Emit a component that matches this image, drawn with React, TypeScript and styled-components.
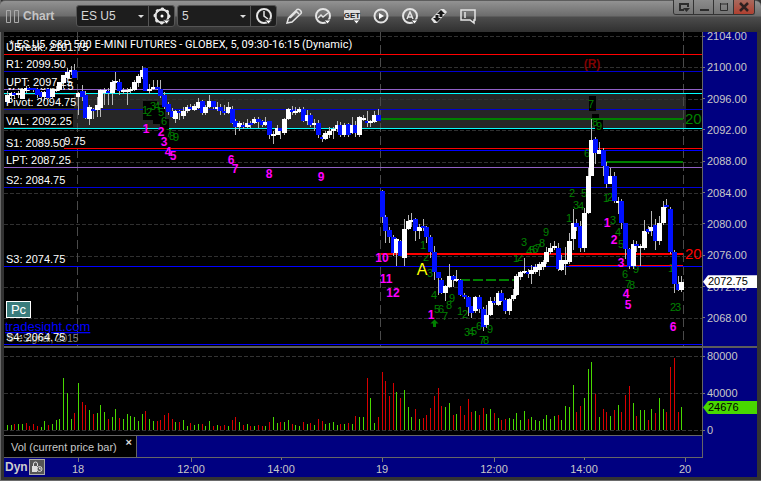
import React from "react";
import styled, { createGlobalStyle } from "styled-components";

const GlobalStyle = createGlobalStyle`
  * { box-sizing: border-box; }
  body {
    margin: 0;
    background: #303030;
    font-family: "Liberation Sans", Arial, sans-serif;
    font-size: 11px;
  }
`;

const Window = styled.main`
  display: flex;
  flex-direction: column;
  background: #333;
  border-left: 1px solid #6a6a6a;
  border-bottom: 1px solid #6a6a6a;
  padding: 0 4px 3px 3px;
`;

const Header = styled.header`
  display: flex;
  align-items: flex-start;
  height: 32px;
  margin: 0 -4px 0 -4px;
  padding: 5px 6px 0 6px;
  border-top: 1px solid #5c5c5c;
  border-radius: 5px 6px 0 0;
  background: linear-gradient(#929292 0, #6c6c6c 15px, #4c4c4c 16px, #2e2e2e 32px);
`;

const Brand = styled.h1`
  display: flex;
  align-items: center;
  gap: 4px;
  width: 70px;
  height: 20px;
  margin: 0;
  font-size: 12px;
  color: #c4c4c4;
`;

const Field = styled.div`
  display: flex;
  height: 22px;
  margin-top: -1px;
  margin-right: 2px;
  border: 1px solid #555;
  border-radius: 3px;
  background: #1d1d1d;
`;

const SelectBox = styled.label<{ $width: number }>`
  position: relative;
  display: block;
  width: ${(p) => p.$width}px;

  &::after {
    content: "";
    position: absolute;
    right: 4px;
    top: 9px;
    border: 3px solid transparent;
    border-top-color: #ddd;
    border-bottom: 0;
    pointer-events: none;
  }
`;

const Picker = styled.select`
  appearance: none;
  width: 100%;
  height: 20px;
  padding: 0 14px 0 4px;
  border: 0;
  background: transparent;
  color: #d8d8d8;
  font: 12px "Liberation Sans", Arial, sans-serif;
`;

const FieldButton = styled.button`
  display: grid;
  place-items: center;
  width: 26px;
  padding: 0;
  border: 0;
  border-left: 1px solid #555;
  background: transparent;
`;

const Tools = styled.nav`
  display: flex;
  flex: 1;
  gap: 9px;
  padding-left: 5px;
`;

const ToolButton = styled.button`
  display: grid;
  place-items: center;
  width: 20px;
  height: 20px;
  padding: 0;
  border: 0;
  background: transparent;
`;

const WindowControls = styled.div`
  display: flex;
  height: 15px;
  margin-top: -6px;
  border: 1px solid #333;
  border-top: 0;
  border-radius: 0 0 3px 3px;
  overflow: hidden;
`;

const ControlButton = styled.button<{ $danger?: boolean }>`
  display: grid;
  place-items: center;
  width: 20px;
  padding: 0;
  border: 0;
  border-right: 1px solid #333;
  background: ${(p) =>
    p.$danger ? "linear-gradient(#a86a5e, #b04030)" : "linear-gradient(#8c8c8c, #747474)"};
  &:last-child { border-right: 0; }
`;

const Board = styled.section`
  display: grid;
  grid-template-columns: minmax(0, 1fr) 55px;
  background: #000080;
`;

const Plot = styled.svg`
  display: block;
  width: 100%;
  height: auto;
  background: #000;
  font-family: "Liberation Sans", Arial, sans-serif;
  font-size: 11px;
`;

const Axis = styled.div<{ $top: number; $bottom: number; $line: number }>`
  position: relative;
  display: flex;
  flex-direction: column;
  justify-content: space-between;
  padding: ${(p) => p.$top}px 0 ${(p) => p.$bottom}px;
  border-left: 1px solid #666;
  line-height: ${(p) => p.$line}px;
  color: #c8c8c8;
`;

const AxisLabel = styled.span`
  display: flex;
  align-items: center;
  gap: 2px;
  &::before {
    content: "";
    width: 2px;
    height: 1px;
    background: #777;
  }
`;

const AxisTag = styled.output<{ $top: string; $color: string }>`
  position: absolute;
  left: 0;
  right: 0;
  top: ${(p) => p.$top};
  height: 13px;
  padding-left: 5px;
  line-height: 13px;
  color: #000;
  background: ${(p) => p.$color};
  clip-path: polygon(0 50%, 5px 0, 100% 0, 100% 100%, 5px 100%);
`;

const Divider = styled.div`
  grid-column: 1 / -1;
  height: 2px;
  background: #5c5c5c;
`;

const TabStrip = styled.div`
  height: 23px;
  border-top: 1px solid #666;
  border-bottom: 1px solid #666;
`;

const Tab = styled.div`
  display: flex;
  align-items: flex-start;
  justify-content: space-between;
  width: 133px;
  height: 21px;
  padding: 4px 4px 0 7px;
  border-right: 1px solid #666;
  background: #000;
  color: #c8c8c8;
  line-height: 14px;
`;

const CloseTab = styled.button`
  padding: 0;
  margin-top: -4px;
  border: 0;
  background: transparent;
  color: #ddd;
  font: bold 11px/12px "Liberation Sans", Arial, sans-serif;
`;

const AxisCorner = styled.div`
  border-left: 1px solid #666;
`;

const TimeAxis = styled.div`
  display: grid;
  grid-column: 1 / 2;
  & > * { grid-area: 1 / 1; }
`;

const TimeScale = styled(Plot)`
  background: #000080;
`;

const DynGroup = styled.div`
  display: flex;
  align-items: flex-start;
  gap: 1px;
  width: 44px;
  padding-left: 1px;
  font-size: 12px;
  font-weight: bold;
  line-height: 18px;
  color: #ccc;
`;

const LockButton = styled.button`
  display: grid;
  place-items: center;
  width: 16px;
  height: 16px;
  margin-top: 1px;
  padding: 0;
  border: 1px solid #aaa;
  background: #555;
`;

// Each row: high, low, open, close, as heights on the price pane.
type Candle = [number, number, number, number];

const FIRST_CANDLE = -19;
const candles: Candle[] = [
  [91, 104, 102, 95], [92, 99, 96, 93], [92, 99, 93, 94], [91, 98, 95, 93], [88, 99, 99, 89],
  [86, 93, 91, 88], [87, 91, 88, 90], [88, 92, 88, 90], [88, 98, 89, 95], [91, 100, 92, 97],
  [91, 101, 97, 92], [88, 99, 89, 98], [88, 98, 97, 89], [86, 92, 91, 89], [82, 91, 90, 82],
  [76, 88, 83, 75], [68, 79, 78, 72], [66, 75, 71, 70], [64, 78, 70, 78],
  [92, 115, 97, 93], [85, 101, 91, 97], [91, 119, 95, 118], [105, 125, 119, 107], [108, 119, 109, 110],
  [97, 117, 110, 105], [89, 117, 108, 90], [88, 105, 93, 90], [88, 105, 91, 93], [80, 105, 93, 82],
  [72, 90, 83, 81], [79, 95, 82, 91], [88, 94, 91, 90], [88, 105, 91, 90], [87, 93, 91, 89],
  [80, 91, 90, 82], [74, 87, 83, 76], [66, 79, 77, 70], [68, 91, 68, 91], [84, 94, 91, 89],
  [80, 90, 89, 87], [80, 90, 87, 89], [80, 98, 89, 96], [92, 109, 95, 107], [102, 115, 104, 112],
  [108, 118, 111, 117], [110, 123, 119, 111], [110, 120, 111, 113], [107, 119, 116, 111],
  [105, 113, 111, 107], [104, 110, 107, 109], [104, 111, 110, 106], [98, 109, 108, 102],
  [100, 115, 101, 113], [105, 115, 113, 107], [95, 108, 107, 101], [101, 109, 101, 107],
  [102, 111, 109, 107], [104, 115, 107, 111], [105, 115, 111, 113], [102, 114, 113, 107],
  [106, 124, 109, 123], [119, 135, 121, 127], [121, 131, 127, 123], [122, 129, 125, 127],
  [119, 128, 127, 123], [121, 128, 123, 125], [117, 124, 123, 119], [117, 128, 119, 122],
  [120, 127, 121, 125], [117, 126, 125, 122], [121, 139, 121, 135], [131, 144, 136, 134],
  [125, 135, 135, 128], [128, 139, 128, 131], [118, 135, 133, 119], [108, 120, 119, 109],
  [106, 115, 110, 112], [107, 115, 113, 111], [107, 113, 112, 109], [107, 122, 109, 121],
  [110, 125, 121, 115], [113, 127, 115, 125], [119, 131, 125, 123], [120, 138, 123, 135],
  [135, 142, 137, 139], [131, 140, 139, 133], [127, 138, 135, 131], [127, 139, 131, 129],
  [121, 132, 129, 125], [122, 137, 125, 135], [123, 137, 135, 125], [123, 137, 124, 135],
  [117, 134, 133, 125], [121, 137, 125, 133], [116, 137, 135, 117], [115, 121, 119, 118],
  [111, 127, 121, 122], [120, 127, 123, 121], [111, 123, 122, 115], [109, 121, 115, 121],
  [190, 223, 191, 217], [215, 243, 217, 231], [227, 243, 230, 237], [235, 256, 237, 253],
  [238, 266, 253, 239], [240, 256, 241, 256], [219, 266, 258, 229], [215, 230, 229, 221],
  [213, 227, 222, 220], [218, 241, 219, 231], [224, 239, 231, 227], [219, 231, 226, 228],
  [226, 243, 227, 237], [235, 258, 237, 252], [246, 280, 252, 272], [272, 295, 272, 278],
  [278, 294, 280, 293], [285, 301, 293, 286], [264, 288, 287, 276], [275, 287, 276, 280],
  [270, 282, 280, 279], [279, 296, 280, 295], [293, 299, 295, 297], [296, 316, 297, 307],
  [306, 318, 306, 313], [296, 313, 311, 297], [295, 313, 297, 309], [307, 331, 309, 327],
  [305, 328, 325, 315], [297, 316, 315, 301], [297, 305, 301, 302], [291, 306, 305, 293],
  [290, 302, 293, 301], [298, 314, 300, 311], [298, 315, 311, 299], [289, 301, 299, 295],
  [274, 296, 295, 276], [271, 280, 277, 272], [258, 274, 273, 271], [269, 278, 272, 274],
  [265, 284, 274, 270], [264, 274, 272, 267], [262, 276, 270, 264], [260, 270, 267, 262],
  [247, 264, 262, 252], [243, 254, 252, 248], [241, 250, 248, 246], [243, 271, 248, 269],
  [255, 271, 270, 260], [247, 275, 264, 260], [233, 264, 262, 241], [209, 250, 239, 223],
  [219, 231, 223, 227], [221, 252, 226, 248], [208, 252, 248, 213], [168, 214, 213, 176],
  [119, 176, 176, 140], [137, 164, 139, 153], [142, 154, 154, 150], [148, 176, 150, 166],
  [162, 188, 166, 184], [168, 184, 184, 176], [172, 203, 176, 201], [197, 214, 202, 201],
  [199, 229, 201, 223], [223, 259, 223, 249], [248, 269, 249, 266], [240, 269, 266, 244],
  [241, 252, 244, 246], [244, 266, 248, 246], [220, 250, 248, 231], [226, 234, 229, 232],
  [211, 236, 231, 227], [219, 250, 225, 241], [216, 245, 241, 223], [201, 225, 223, 207],
  [199, 208, 205, 207], [207, 254, 209, 252], [250, 293, 252, 284], [276, 291, 284, 290],
  [276, 292, 290, 282],
];

// Bar heights of the volume pane; a negative value is a down bar.
const FIRST_VOLUME = -20;
const volumes = [
  4, 5, 5, -6, 6, 6, -7, -4, -6, -4, 3, 9, -5, 6, 10, 11, 52, 37, 11, -17,
  47, -28, -25, 20, -16, 17, 25, 18, -11, 13, 21, -12, 11, 16, 14, 13, 9, 16, -19, 11,
  9, -9, -10, -15, -17, -11, 8, -8, 10, 4, -7, 5, 6, -6, 4, 9, -4, 5, -4, -5,
  4, -10, -13, 8, -5, 6, -4, 4, -5, -4, 4, -8, 13, 7, -8, 8, 10, -6, 5, 4,
  -8, 6, -7, 5, -11, -9, 6, 7, 8, 5, -6, 6, -7, 6, -14, 13, 13, -52, 32, 7, -13,
  -58, -49, -34, -47, 38, -32, 40, 23, 13, -21, 11, -12, -15, -22, -34, -42, -24, 23, 27, -15,
  16, -24, -15, -31, -18, 19, -15, -22, 16, 21, -17, 12, -10, -11, 12, 11, 17, 10, 19, -11,
  13, 10, 9, 11, 15, 11, 14, -15, 10, 24, 23, 45, -18, -24, 32, 61, 68, -36, 13,
  -21, -18, 14, -20, 25, -18, -35, -44, 27, -14, 20, 20, -10, 21, -17, 32, 21, -18, -63, -72,
  -18, 23,
];

const barX = (index: number) => Math.floor(78.5 + index * 3.747);

type Mark = [string, number, number];

const countdown: Mark[] = [
  ["1", 146, 133], ["2", 161, 136], ["3", 164, 146], ["4", 168, 156], ["5", 173, 160],
  ["6", 231, 164], ["7", 235, 173], ["8", 269, 178], ["9", 321, 181], ["10", 382, 262],
  ["11", 386, 283], ["12", 393, 297], ["1", 431, 319], ["1", 607, 227], ["2", 614, 244],
  ["3", 621, 267], ["4", 626, 298], ["5", 628, 309], ["6", 673, 331],
];

const setup: Mark[] = [
  ["1", 145, 114], ["2", 149, 116], ["3", 153, 110], ["4", 157, 110], ["5", 161, 116],
  ["6", 164, 125], ["7", 169, 137], ["8", 172, 140], ["9", 176, 141],
  ["1", 423, 249], ["2", 426, 261], ["3", 430, 277], ["4", 434, 299], ["5", 437, 313],
  ["6", 441, 313], ["7", 445, 320], ["8", 449, 309], ["9", 452, 302], ["1", 460, 315],
  ["2", 465, 318], ["3", 467, 336], ["4", 471, 336], ["5", 474, 335], ["6", 479, 330],
  ["7", 482, 344], ["8", 486, 344], ["9", 490, 333], ["1", 516, 262], ["2", 520, 261],
  ["3", 524, 246], ["4", 529, 255], ["5", 532, 254], ["6", 535, 253], ["7", 538, 252],
  ["8", 542, 247], ["9", 546, 236], ["1", 569, 222], ["2", 572, 197], ["3", 576, 209],
  ["4", 581, 210], ["5", 584, 197], ["6", 587, 157], ["7", 591, 108], ["8", 595, 126],
  ["9", 599, 130], ["1", 606, 202], ["2", 610, 201], ["3", 613, 224], ["4", 618, 236],
  ["5", 621, 248], ["6", 625, 278], ["7", 628, 288], ["8", 632, 289], ["9", 636, 273],
  ["1", 671, 272], ["2", 673, 311], ["3", 678, 311],
];

// Levels whose names lie partly behind a neighbour.
const backLevels: Mark[] = [["VAH: 2096.75", 6, 90], ["LBreak: 2089.75", 5, 145]];

// Label, baseline, width of its backing.
const levels: Mark[] = [
  ["UBreak: 2101.75", 51, 0], ["R1: 2099.50", 68, 60], ["UPT: 2097.25", 86, 64],
  ["Pivot: 2094.75", 106, 70], ["VAL: 2092.25", 125, 69], ["S1: 2089.50", 147, 60],
  ["LPT: 2087.25", 164, 64], ["S2: 2084.75", 184, 60], ["S3: 2074.75", 263, 60],
  ["S4: 2064.75", 341, 0],
];

const levelLines: [number, string][] = [
  [54, "#ff0000"], [71, "#0000d0"], [89, "#9060c8"], [93, "#00ffff"], [109, "#0000d0"],
  [128, "#00ffff"], [148, "#ff0000"], [150, "#0000ff"], [167, "#9060c8"], [187, "#0000d8"],
  [266, "#0000ff"], [344, "#0000ff"],
];

const priceRows = [36, 67, 99, 130, 162, 193, 224, 256, 287, 318];
const prices = ["2104.00", "2100.00", "2096.00", "2092.00", "2088.00", "2084.00", "2080.00", "2076.00", "2072.00", "2068.00"];
const times: Mark[] = [
  ["18", 78, 4], ["12:00", 191, 4], ["14:00", 281, 2], ["19", 382, 4],
  ["12:00", 494, 4], ["14:00", 584, 2], ["20", 685, 4],
];

function Digits({ marks, color, bold }: { marks: Mark[]; color: string; bold?: boolean }) {
  return (
    <g fill={color} textAnchor="middle" fontWeight={bold ? "bold" : "normal"} fontSize={bold ? 12 : 11}>
      {marks.map(([text, x, y], n) => (
        <text key={n} x={x} y={y}>{text}</text>
      ))}
    </g>
  );
}

function PricePane() {
  return (
    <Plot viewBox="4 32 698 314" role="img" aria-label="ES U5 five minute candles">
      <g shapeRendering="crispEdges">
        <rect x="4" y="94" width="682" height="34" fill="#262626" />
        {priceRows.map((y) => (
          <path key={y} d={`M4 ${y}.5H702`} stroke="#303030" strokeDasharray="4 2" />
        ))}
        {[77, 380, 683].map((x) => (
          <path key={x} d={`M${x}.5 32V346`} stroke="#4a4a4a" strokeDasharray="9 4" />
        ))}
        {levelLines.map(([y, color]) => (
          <rect key={y} x="4" y={y} width="698" height="1" fill={color} />
        ))}
        <path d="M143 101h14v4h8v14h4v13h-9v-8h-7v-4h-10z" fill="#000" />
        <rect x="589" y="96" width="7" height="15" fill="#000" />
        <path d="M592 114h7v5h4v13h-8v-6h-3z" fill="#000" />
      </g>
      <text x="7" y="342" fontSize="10" fill="#888">© eSignal, 2015</text>
      <a href="https://tradesight.com">
        <text x="5" y="331" fontSize="13" fill="#0000ff" textDecoration="underline">tradesight.com</text>
      </a>
      {backLevels.map(([text, x, y]) => (
        <text key={text} x={x} y={y} fill="#fff">{text}</text>
      ))}
      {levels.map(([text, y, back]) => (
        <rect key={text} x="4" y={y - 11} width={back} height="13" fill="#000" />
      ))}
      <Digits marks={setup} color="#008000" />
      <g shapeRendering="crispEdges">
        <rect x="381" y="118" width="302" height="2" fill="#008000" />
        <rect x="606" y="161" width="77" height="2" fill="#008000" />
        <path d="M460 280H516" stroke="#008000" strokeWidth="2" strokeDasharray="10 3" />
        <rect x="381" y="253" width="302" height="2" fill="#ff0000" />
        <rect x="569" y="265" width="114" height="1" fill="#ff0000" />
      </g>
      <text x="592" y="68" textAnchor="middle" fontSize="12" fontWeight="bold" fill="#800000">(R)</text>
      <Digits marks={countdown} color="#ff00ff" bold />
      <g shapeRendering="crispEdges">
        {candles.map(([high, low, open, close], n) => {
          const x = barX(FIRST_CANDLE + n);
          const up = close < open;
          return (
            <g key={n}>
              <rect x={x} y={high} width="1" height={low - high} fill="#b8b8b8" />
              <rect
                x={x - 2}
                y={Math.min(open, close)}
                width="5"
                height={Math.max(2, Math.abs(close - open))}
                fill={up ? "#ffffff" : "#0010ff"}
              />
            </g>
          );
        })}
      </g>
      <path d="M434.500 319.500l4 4h-2.500v3.500h-3v-3.500h-2.500z" fill="#008000" />
      <text x="422" y="275" textAnchor="middle" fontSize="16" fill="#ffff00">A</text>
      <text x="685" y="124" fontSize="15" fill="#008000">20</text>
      <text x="685" y="259" fontSize="15" fill="#ff0000">20</text>
      {levels.map(([text, y]) => (
        <text key={text} x="6" y={y} fill="#fff">{text}</text>
      ))}
      <text x="9" y="48" fill="#fff" fontFamily="Roboto, sans-serif">* ES U5, S&amp;P 500 E-MINI FUTURES - GLOBEX, 5, 09:30-16:15 (Dynamic)</text>
      <rect x="6.500" y="301.500" width="24" height="16" fill="#3a7c7c" stroke="#fff" />
      <text x="18.500" y="314" textAnchor="middle" fontSize="13" fill="#fff">Pc</text>
    </Plot>
  );
}

function VolumePane() {
  return (
    <Plot viewBox="4 348 698 87" role="img" aria-label="Volume">
      <g shapeRendering="crispEdges">
        {[356, 393, 430].map((y) => (
          <path key={y} d={`M4 ${y}.5H702`} stroke="#333" strokeDasharray="4 2" />
        ))}
        {volumes.map((v, n) => (
          <rect
            key={n}
            x={barX(FIRST_VOLUME + n)}
            y={430 - Math.abs(v)}
            width="1"
            height={Math.abs(v)}
            fill={v < 0 ? "#d80000" : "#48d800"}
          />
        ))}
      </g>
    </Plot>
  );
}

function Icon({ children, size = 20 }: { children: React.ReactNode; size?: number }) {
  return (
    <svg width={size} height={size} viewBox={`0 0 ${size} ${size}`} fill="none" stroke="#e4e4e4" strokeWidth="2" aria-hidden="true">
      {children}
    </svg>
  );
}

const menuMark = <path d="M11 14h7l-3.500 4z" fill="#fff" stroke="#444" strokeWidth="1" />;

export default function App() {
  return (
    <>
      <GlobalStyle />
      <Window>
        <Header>
          <Brand>
            <svg width="13" height="13" fill="none" stroke="#aaa" aria-hidden="true">
              <path d="M.5.5h4v12h-4zM8.500.5h4v12h-4z" />
            </svg>
            Chart
          </Brand>
          <Field>
            <SelectBox $width={71}>
              <Picker aria-label="Symbol" defaultValue="ES U5"><option>ES U5</option></Picker>
            </SelectBox>
            <FieldButton aria-label="Symbol settings">
              <Icon>
                <circle cx="10" cy="10" r="6.500" strokeWidth="2" />
                <circle cx="10" cy="10" r="7" strokeWidth="3" strokeLinecap="round" strokeDasharray=".5 5" />
                <circle cx="10" cy="10" r="1.500" fill="#fff" stroke="none" />
                {menuMark}
              </Icon>
            </FieldButton>
          </Field>
          <Field>
            <SelectBox $width={72}>
              <Picker aria-label="Interval" defaultValue="5"><option>5</option></Picker>
            </SelectBox>
            <FieldButton aria-label="Time template">
              <Icon>
                <circle cx="10" cy="10" r="7" />
                <path d="M10 5v5l4 3" strokeWidth="1.500" />
                {menuMark}
              </Icon>
            </FieldButton>
          </Field>
          <Tools>
            <ToolButton aria-label="Draw">
              <Icon><path d="M3 17l1.500-5L13 3.500q2-1 3.500 1t.5 3L8 16zM12 5l3 3M6 12l6-6" strokeWidth="1.500" /></Icon>
            </ToolButton>
            <ToolButton aria-label="Studies">
              <Icon><circle cx="10" cy="10" r="7" /><path d="M5 12l3-3 2 2 5-4" strokeWidth="1.500" />{menuMark}</Icon>
            </ToolButton>
            <ToolButton aria-label="Get">
              <Icon>
                <rect x="2" y="4" width="16" height="10" rx="1" fill="#ddd" stroke="none" />
                <text x="10" y="12" textAnchor="middle" fontSize="8" fontWeight="bold" fontFamily="Liberation Sans, sans-serif" fill="#222" stroke="none">GET</text>
                {menuMark}
              </Icon>
            </ToolButton>
            <ToolButton aria-label="Replay">
              <Icon><circle cx="10" cy="10" r="6.500" /><path d="M8 7l5 3-5 3z" fill="#fff" stroke="none" /></Icon>
            </ToolButton>
            <ToolButton aria-label="Alerts">
              <Icon>
                <circle cx="10" cy="10" r="7" />
                <path d="M7 13l3-7 3 7M8 11h4" strokeWidth="1.500" />
                {menuMark}
              </Icon>
            </ToolButton>
            <ToolButton aria-label="Link">
              <Icon>
                <path d="M2 13L12 3h3l3 3L8 17H5z" fill="#e4e4e4" stroke="none" />
                <path d="M12 4l4 4h-2.500v3h-3V8H8z" fill="#171717" stroke="none" />
                <path d="M8 16l-4-4h2.500V9h3v3h2.500z" fill="#171717" stroke="none" />
              </Icon>
            </ToolButton>
            <ToolButton aria-label="Note">
              <Icon><path d="M3 4h14v10h-1v3l-4-3H3zM7 6v6" strokeWidth="1.500" /></Icon>
            </ToolButton>
          </Tools>
          <WindowControls>
            <ControlButton aria-label="Pop out">
              <svg width="12" height="11" fill="none" stroke="#2c2c2c" strokeWidth="2" aria-hidden="true">
                <path d="M6 8H2V2h8v3" /><path d="M5 6h7l-3.500 4z" fill="#2c2c2c" stroke="none" />
              </svg>
            </ControlButton>
            <ControlButton aria-label="Minimize">
              <svg width="10" height="10" aria-hidden="true"><path d="M1 7h9v2H1z" fill="#2c2c2c" /></svg>
            </ControlButton>
            <ControlButton aria-label="Maximize">
              <svg width="10" height="10" fill="none" stroke="#2c2c2c" aria-hidden="true"><path d="M1 2h8M1.500 1v7.500h7V1" strokeWidth="1" /></svg>
            </ControlButton>
            <ControlButton aria-label="Close" $danger>
              <svg width="10" height="10" stroke="#302020" strokeWidth="2.500" aria-hidden="true"><path d="M1 1l8 8M9 1L1 9" /></svg>
            </ControlButton>
          </WindowControls>
        </Header>
        <Board>
          <PricePane />
          <Axis $top={0} $bottom={24} $line={8}>
            {prices.map((p) => <AxisLabel key={p}>{p}</AxisLabel>)}
            <AxisTag $top="77.500%" $color="#fff">2072.75</AxisTag>
          </Axis>
          <Divider />
          <VolumePane />
          <Axis $top={3} $bottom={0} $line={10}>
            {["80000", "40000", "0"].map((v) => <AxisLabel key={v}>{v}</AxisLabel>)}
            <AxisTag $top="61%" $color="#48d800">24676</AxisTag>
          </Axis>
          <TabStrip>
            <Tab>
              Vol (current price bar)
              <CloseTab aria-label="Close study">×</CloseTab>
            </Tab>
          </TabStrip>
          <AxisCorner />
          <TimeAxis>
            <TimeScale viewBox="4 458 698 19" role="img" aria-label="Time scale">
              <g fill="#c8c8c8" textAnchor="middle">
                {times.map(([text, x, tick], n) => (
                  <g key={n}>
                    <rect x={x} y="458" width="1" height={tick} fill="#777" />
                    <text x={x} y="473">{text}</text>
                  </g>
                ))}
              </g>
            </TimeScale>
            <DynGroup>
              Dyn
              <LockButton aria-label="Lock time scale">
                <svg width="12" height="12" fill="none" stroke="#ddd" aria-hidden="true">
                  <path d="M2.500 5V3q0-2 2-2t2 2v2" />
                  <path d="M1 5h5v6H1z" fill="#ddd" stroke="none" />
                  <circle cx="8.500" cy="8" r="2.500" /><path d="M8.500 6.500V8H10" />
                </svg>
              </LockButton>
            </DynGroup>
          </TimeAxis>
        </Board>
      </Window>
    </>
  );
}
